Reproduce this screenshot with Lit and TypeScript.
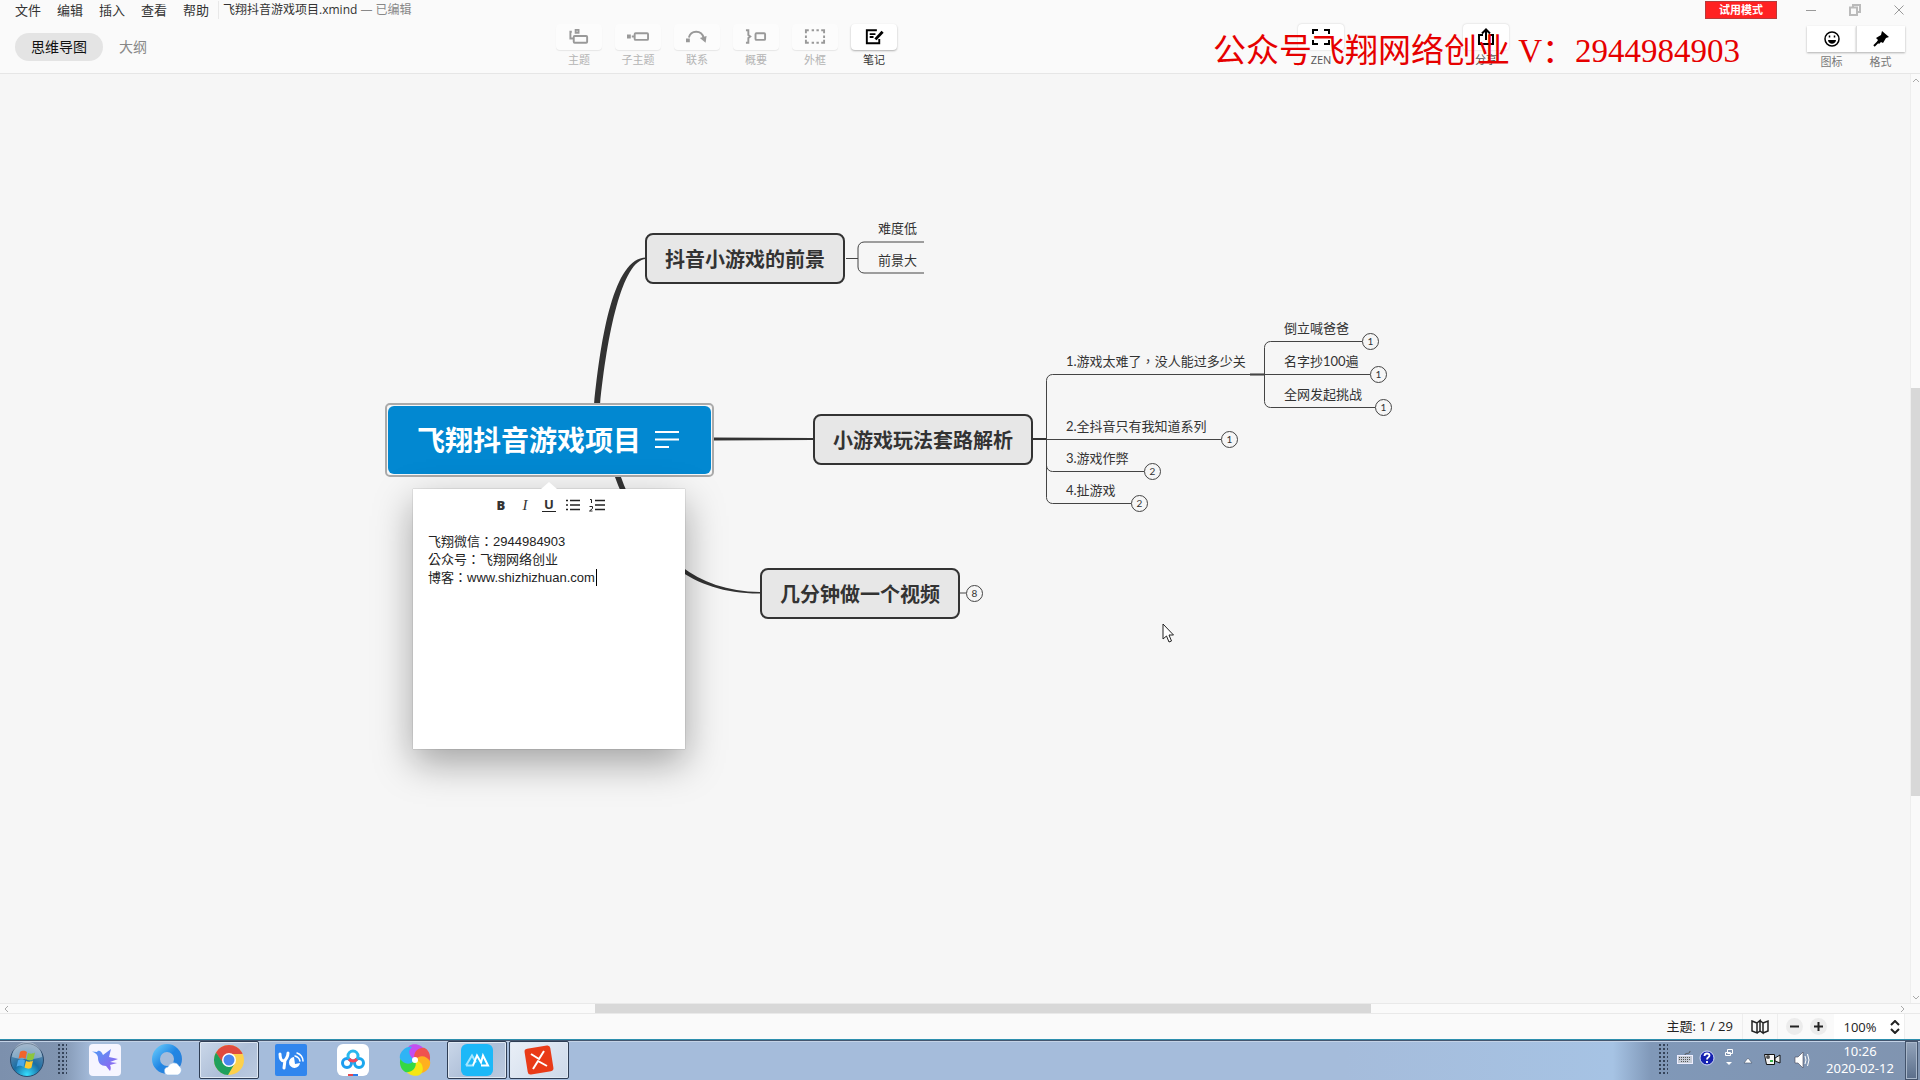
import { LitElement, html, svg, css } from "lit";
import { customElement } from "lit/decorators.js";
import { styleMap } from "lit/directives/style-map.js";

const HEADER = 74;
const at = (x: number, y: number) => styleMap({ left: `${x}px`, top: `${y - HEADER}px` });

const tools = [
  { label: "主题", on: false, icon: svg`<path d="M4 2.500H2.500V9.500H6M8 .500h3v3h-3z" /><rect x="6" y="7" width="14" height="7" rx="1" />` },
  { label: "子主题", on: false, icon: svg`<path d="M1 6.500h2v2h-2zM5 7.500h3" /><rect x="8" y="4" width="14" height="7" rx="1" />` },
  { label: "联系", on: false, icon: svg`<path d="M1 10.500h2v2h-2zM3 8.500C5 1 16 0 18.500 9" /><path class="fill" d="M14.500 9l7-2-1 7z" />` },
  { label: "概要", on: false, icon: svg`<path d="M1 1h2.500v5l2 1.500-2 1.500v5H1" /><rect x="11" y="4" width="10" height="7" rx="1" />` },
  { label: "外框", on: false, icon: svg`<path d="M2 4V1h3M8 1h2.500M13 1h2.500M18 1h3v3M21 6.500v2.500M21 11v3h-3M15.500 14H13M10.500 14H8M5 14H2v-3M2 9V6.500" />` },
  { label: "笔记", on: true, icon: svg`<path d="M14.500 1H4v13.500h13V10M7 5h6M7 8h4" /><path d="M20.500 2.500L13 10.500" stroke-width="3" />` },
];

const branches = [
  { text: "抖音小游戏的前景", x: 645, y: 233 },
  { text: "小游戏玩法套路解析", x: 813, y: 414 },
  { text: "几分钟做一个视频", x: 760, y: 568 },
];

const leaves = [
  { text: "难度低", x: 878, y: 228 },
  { text: "前景大", x: 878, y: 260 },
  { text: "1.游戏太难了，没人能过多少关", x: 1066, y: 361 },
  { text: "2.全抖音只有我知道系列", x: 1066, y: 426 },
  { text: "3.游戏作弊", x: 1066, y: 458 },
  { text: "4.扯游戏", x: 1066, y: 490 },
  { text: "倒立喊爸爸", x: 1284, y: 328 },
  { text: "名字抄100遍", x: 1284, y: 361 },
  { text: "全网发起挑战", x: 1284, y: 394 },
];

// Full-width commas are set in a face that centres them in their cell.
const centred = (text: string) =>
  text.split("，").map((part, i) => (i ? html`<span class="comma">，</span>${part}` : part));

const counts = [
  { n: 8, x: 974, y: 593 },
  { n: 1, x: 1229, y: 439 },
  { n: 2, x: 1152, y: 471 },
  { n: 2, x: 1139, y: 503 },
  { n: 1, x: 1370, y: 341 },
  { n: 1, x: 1378, y: 374 },
  { n: 1, x: 1383, y: 407 },
];

const petals = ["#c44df0", "#f0524f", "#ffb01f", "#f5e614", "#35d943", "#2fb4f5"];

const apps = [
  {
    name: "迅雷", open: false, bright: false,
    icon: svg`<rect width="32" height="32" rx="4" fill="#f6f5ff" />
      <path fill="url(#bird)" d="M3 7.500L8 8c1-2 4-2 6 3l8-6-2 8 9 2-8 3 7 1-7 2c1 2 1 4 0 6l-4-5c-5 0-8-3-8-8 0-3-2-5-6-6.500z" />`,
  },
  {
    name: "QQ浏览器", open: false, bright: false,
    icon: svg`<circle cx="16" cy="15" r="11" fill="none" stroke="url(#ring)" stroke-width="8" />
      <path fill="#fff" stroke="#8fb9e6" stroke-width=".6" d="M18 31a4 4 0 0 1-1-8 6 6 0 0 1 11-1 5 5 0 0 1-1 9z" />`,
  },
  {
    name: "Chrome", open: true, bright: false,
    icon: svg`<circle cx="16" cy="16" r="15" fill="#fdd04b" />
      <path fill="#e04a3f" d="M3 8.500A15 15 0 0 1 29 8.500L29.500 10H16L9 19z" />
      <path fill="#1fa05c" d="M3 8.500A15 15 0 0 0 15 31l7-12-6 3-6-3z" />
      <circle cx="16" cy="16" r="7" fill="#fff" /><circle cx="16" cy="16" r="5.500" fill="#4a86ee" />`,
  },
  {
    name: "YO", open: false, bright: false,
    icon: svg`<rect width="32" height="32" rx="2" fill="#3186ee" />
      <path d="M5 10c0 5 2 7 4 7 2-1 4-5 4-8M10 16l-1 8" fill="none" stroke="#fff" stroke-width="3" stroke-linecap="round" stroke-linejoin="round" />
      <path fill="#fff" d="M19 13a5.500 5.500 0 1 0 6 6l-5 1z" /><path d="M20 12a7 7 0 0 1 5 5M22 9a9 9 0 0 1 6 8" fill="none" stroke="#fff" stroke-width="1.500" stroke-linecap="round" />`,
  },
  {
    name: "百度网盘", open: false, bright: false,
    icon: svg`<rect width="32" height="32" rx="6" fill="#fff" />
      <g fill="none" stroke-width="3"><circle cx="10" cy="19" r="4.500" stroke="#1e9df0" /><circle cx="22" cy="19" r="4.500" stroke="#1aa7ee" /><circle cx="16" cy="12" r="5" stroke="#29b8ee" />
      <path d="M12 15a5 5 0 0 0 8 0" stroke="#f2495c" /></g>
      <path fill="#e8464c" d="M11 30h6v2h-6z" /><path fill="#2b7de9" d="M16 30h5v2h-5z" />`,
  },
  {
    name: "色环", open: false, bright: false,
    icon: svg`${petals.map((c, i) => svg`<path fill=${c} transform="rotate(${i * 60} 16 16)" d="M16 16C9 15 6 8 10 2c5-4 14-1 16 5-5-2-10 1-10 9z" />`)}<circle cx="16" cy="16" r="3" fill="#fff" />`,
  },
  {
    name: "小米", open: true, bright: false,
    icon: svg`<rect width="32" height="32" rx="6" fill="#1cb8f8" />
      <path d="M5 21.500l6-10 4 7M5 21.500h8" fill="none" stroke="#a5e6ff" stroke-width="2" /><path d="M12 21.500l4-10 4 7 2-7 5 10h-7" fill="none" stroke="#fff" stroke-width="2" />`,
  },
  {
    name: "XMind", open: true, bright: true,
    icon: svg`<rect x="3" y="3" width="26" height="26" rx="3" fill="#e93a17" transform="rotate(-9 16 16)" />
      <path d="M8 10l8 5 5-8M10 25l5-8 9 5" fill="none" stroke="#fff" stroke-width="2" stroke-linejoin="round" />`,
  },
];

@customElement("app-root")
export class AppRoot extends LitElement {
  static styles = css`
    :host {
      display: flex;
      flex-direction: column;
      height: 100vh;
      overflow: hidden;
      position: relative;
      background: #fafafa;
      color: #333;
      font: 13px/18px "Open Sans", "Noto Sans CJK SC", sans-serif;
    }
    * { box-sizing: border-box; }
    button, input, textarea {
      margin: 0; padding: 0; border: 0; background: none;
      font: inherit; color: inherit;
    }
    svg { display: block; flex: none; }
    .title { display: flex; align-items: center; height: 20px; padding: 0 15px; }
    .menus { display: flex; gap: 16px; padding-right: 9px; margin-right: 4px; border-right: 1px solid #e8e8e8; }
    .doc { font-size: 12px; }
    .doc small { font-size: 12px; color: #888; }
    .trial {
      margin-left: auto; margin-right: 28px; width: 72px; height: 18px;
      background: #ff2222; border: 1px solid #b83a3a; color: #fff;
      font-size: 11px; font-weight: 700; line-height: 16px;
    }
    .wins { display: flex; gap: 32px; }
    .wins svg { fill: none; stroke: #999; }
    .bar { display: flex; height: 54px; padding: 0 15px; border-bottom: 1px solid #e6e6e6; align-items: flex-start; }
    .tabs { display: flex; flex: none; width: 541px; padding-top: 13px; font-size: 14px; gap: 16px; }
    .tab { height: 28px; color: #888; }
    .tab.on { background: #e4e4e4; border-radius: 14px; padding: 0 16px; color: #111; }
    .tools { display: flex; gap: 13px; padding-top: 4px; }
    .tools.right { margin-left: auto; margin-right: 298px; gap: 119px; }
    .tool { width: 46px; display: flex; flex-direction: column; align-items: center; font-size: 11px; line-height: 18px; color: #b4b4b4; white-space: nowrap; }
    .tool .face {
      display: grid; place-items: center; width: 46px; height: 26px; margin-bottom: 1px;
      border-radius: 4px; background: #fcfcfc; box-shadow: 0 1px 1px rgba(0, 0, 0, .08);
    }
    .tool svg { fill: none; stroke: #999; stroke-width: 2; }
    .tool .fill { fill: #999; stroke: none; }
    .tool.on { color: #333; }
    .tool.on .face { background: #fff; box-shadow: 0 1px 2px rgba(0, 0, 0, .3); }
    .tool.on svg { stroke: #000; }
    .tool.soft { color: #555; }
    .tool.soft .face { box-shadow: 0 0 2px rgba(0, 0, 0, .2); }
    .pair { display: flex; padding-top: 6px; }
    .pair button { width: 49px; font-size: 11px; color: #777; display: flex; flex-direction: column; align-items: center; }
    .pair .face { width: 49px; height: 26px; display: grid; place-items: center; background: #fff; margin-bottom: 1px; box-shadow: 0 1px 2px rgba(0, 0, 0, .3); }
    .pair button + button .face { border-left: 1px solid #ddd; }
    .mark {
      position: absolute; left: 1213px; top: 31px; margin: 0; color: #e60000; white-space: nowrap;
      font: 33px/40px "Liberation Serif", "Noto Sans CJK SC", serif;
    }

    .work { flex: 1; min-height: 0; display: flex; background: #f6f6f6; }
    .canvas { flex: 1; min-width: 0; position: relative; overflow: hidden; }
    .links { position: absolute; left: 0; top: 0; width: 100%; height: 100%; fill: none; stroke: #444; }
    .links .solid { fill: #333; stroke: none; }
    .node {
      position: absolute; height: 51px; padding: 0 18px; border: 2px solid #333; border-radius: 8px;
      background: #e7e7e7; font-size: 20px; line-height: 47px; font-weight: 700; white-space: nowrap;
      font-family: "Noto Sans CJK SC", sans-serif;
    }
    .root {
      position: absolute; isolation: isolate; display: flex; align-items: center; gap: 14px;
      height: 74px; width: 329px; padding: 0 30px 2px; margin-left: -1px;
      border: 2px solid #aaa; border-radius: 5px; background: #f6f6f6; color: #fff; white-space: nowrap;
      font: 700 28px/40px "Noto Sans CJK SC", sans-serif;
    }
    .root::before { content: ""; position: absolute; z-index: -1; inset: 1px; background: #0288d1; border-radius: 6px; }
    .root svg { stroke: #fff; stroke-width: 2; }
    .leaf { position: absolute; height: 18px; margin-top: -9px; white-space: nowrap; font-family: Lato, "Noto Sans CJK SC", sans-serif; }
    .comma { font-family: "Noto Sans CJK TC", sans-serif; }
    .count {
      position: absolute; width: 17px; height: 17px; margin: -8px 0 0 -8px; border: 1px solid #444; border-radius: 50%;
      background: #f6f6f6; font-size: 10px; line-height: 15px; text-align: center; font-family: Lato, sans-serif;
    }
    .note {
      position: absolute; width: 272px; height: 260px; padding: 7px 15px 15px; background: #fff;
      box-shadow: 0 0 1px rgba(0, 0, 0, .4), 0 14px 36px rgba(0, 0, 0, .34); display: flex; flex-direction: column;
    }
    .note::before {
      content: ""; position: absolute; left: 128px; top: -7px;
      border: 8px solid transparent; border-top: 0; border-bottom: 7px solid #fff;
    }
    .marks { display: flex; justify-content: center; gap: 8px; margin-bottom: 19px; }
    .marks button { width: 16px; height: 18px; display: grid; place-items: center; }
    .marks svg { stroke: #222; fill: none; stroke-width: 1.5; }
    .b { font-weight: 800; }
    .i { font-style: italic; font-family: "Liberation Serif", serif; font-size: 15px; }
    .u { font-weight: 700; border-bottom: 1px solid #222; line-height: 13px; padding: 0 2px; }
    .note textarea {
      flex: 1; resize: none; outline: 0; overflow: hidden; color: #222;
      font: 13px/18px "Liberation Sans", "Noto Sans CJK TC", sans-serif;
    }
    .caret { position: absolute; left: 183px; top: 80px; width: 1px; height: 17px; background: #000; }
    .pointer { position: absolute; }
    .vscroll { width: 10px; flex: none; background: #fafafa; border-left: 1px solid #eee; display: flex; flex-direction: column; align-items: center; padding: 4px 0 3px; }
    .vscroll i { width: 9px; height: 408px; background: #d8d8d8; margin: 305px 0 auto; }
    .vscroll svg, .hscroll svg { fill: none; stroke: #aaa; }
    .hscroll { height: 11px; flex: none; display: flex; align-items: center; padding: 0 15px 0 4px; border: solid #e9e9e9; border-width: 1px 0; }
    .hscroll div { flex: 1; display: flex; }
    .hscroll i { margin-left: 31%; width: 41%; height: 9px; background: #d8d8d8; }

    .status { height: 25px; flex: none; display: flex; justify-content: flex-end; align-items: stretch; padding-right: 15px; color: #222; line-height: 24px; }
    .status .topic { padding-right: 9px; border-right: 1px solid #eee; }
    .status button { display: grid; place-items: center; }
    .status .map { width: 35px; border-right: 1px solid #eee; margin-right: 8px; }
    .status .zoom { width: 17px; height: 17px; border-radius: 50%; background: #ececec; align-self: center; margin-right: 7px; }
    .status svg { fill: none; stroke: #222; stroke-width: 2; }
    .zoomval { display: flex; align-items: center; width: 71px; background: #fff; border-right: 1px solid #eee; }
    .zoomval input { width: 52px; text-align: center; min-width: 0; height: 24px; }

    .task {
      height: 41px; flex: none; display: flex; align-items: stretch; border-top: 1px solid #2d8fae;
      box-shadow: inset 0 1px 0 #44566f, inset 0 2px 0 #c3d2e6;
      background: linear-gradient(90deg, #7c90ad 0, #8094b0 60px, #a5bcdb 92px, #a5bcdb 70%, #a6c3e4 84%, #8098b8 86%, #8094b0 100%);
      color: #fff;
    }
    .start { width: 54px; display: grid; place-items: center; }
    .grip { width: 9px; height: 32px; margin: 4px 8px 0 4px; background: radial-gradient(circle at 1px 1px, #35445a 1px, transparent 1px) 0 0 / 4px 4px; }
    .slots { display: flex; gap: 2px; padding-top: 1px; }
    .slot { width: 60px; height: 38px; display: grid; place-items: center; border-radius: 2px; }
    .slot.open { background: linear-gradient(135deg, #cad7e9, #aebfd8 55%, #bccbe0); border: 1px solid #2e3d54; box-shadow: inset 0 0 0 1px #dfe8f3; }
    .slot.bright { background: linear-gradient(135deg, #e9eff7, #cdd9e9); }
    .tray { margin-left: auto; display: flex; align-items: center; }
    .tray .grip { margin: 0 9px 0 0; }
    .clock { width: 90px; text-align: center; line-height: 17px; font-family: "Noto Sans", sans-serif; }
    .clock div { white-space: nowrap; }
    .desk { width: 13px; height: 39px; margin: 1px 2px 0 0; border: 1px solid #43536b; box-shadow: inset 0 0 0 1px #a9b7ca; background: linear-gradient(#93a4bb, #5b6e8a); }
  `;

  private header() {
    return html`
      <header>
        <div class="title">
          <nav class="menus">${["文件", "编辑", "插入", "查看", "帮助"].map((m) => html`<button>${m}</button>`)}</nav>
          <span class="doc">飞翔抖音游戏项目.xmind <small>— 已编辑</small></span>
          <button class="trial">试用模式</button>
          <div class="wins">
            <button aria-label="最小化"><svg width="12" height="12"><path d="M1 6.500h10" /></svg></button>
            <button aria-label="还原"><svg width="12" height="12"><path stroke="#bbb" stroke-width="2" d="M4 3V1h7v7H9M1 3.500h7V11H1z" /></svg></button>
            <button aria-label="关闭"><svg width="12" height="12"><path d="M1.500 1.500l9 9M10.500 1.500l-9 9" /></svg></button>
          </div>
        </div>
        <div class="bar">
          <div class="tabs"><button class="tab on">思维导图</button><button class="tab">大纲</button></div>
          <div class="tools">
            ${tools.map((t) => html`<button class="tool ${t.on ? "on" : ""}"><span class="face"><svg width="22" height="16" viewBox="0 0 23 16">${t.icon}</svg></span>${t.label}</button>`)}
          </div>
          <div class="tools right">
            <button class="tool on soft"><span class="face"><svg width="18" height="16"><path d="M1 5V1h5M12 1h5v4M17 11v4h-5M6 15H1v-4" /></svg></span>ZEN</button>
            <button class="tool on soft"><span class="face"><svg width="16" height="18"><path d="M5 7H1v9h14V7h-4M8 12V2M4 5.500l4-4 4 4" /></svg></span>分享</button>
          </div>
          <div class="pair">
            <button><span class="face"><svg width="16" height="16" fill="none" stroke="#000" stroke-width="1.500"><circle cx="8" cy="8" r="7" /><path fill="#000" stroke="none" d="M4 9h8c-.5 5-7.500 5-8 0z" /><path d="M5.500 4.500v2M10.500 4.500v2" /></svg></span>图标</button>
            <button><span class="face"><svg width="16" height="16"><path d="M9 0l7 6-3 1-3 5-2-1-2 2-2-2 1-2-2-2 5-3z" /><path d="M1 15l5-5" stroke="#000" stroke-width="2" /></svg></span>格式</button>
          </div>
        </div>
      </header>`;
  }

  private links() {
    return svg`
      <g transform="translate(0 ${-HEADER})">
        <path class="solid" d="M594 405C601 335 614 258 646 257.500V259C622 260 607 335 600 405z" />
        <path class="solid" d="M713 437.500L813 438v2L713 440.500z" />
        <path class="solid" d="M615 460C635 522 672 591 760 592v1.500C668 594 631 527 609 460z" />
        <path d="M846 258.500h12M924 242H864a6 6 0 0 0-6 6v19a6 6 0 0 0 6 6h60" />
        <path stroke="#333" stroke-width="2" d="M1033 439h13M1250 374.500h14" />
        <path d="M1265 374.500H1052.500a6 6 0 0 0-6 6V497.500a6 6 0 0 0 6 6H1131M1046.500 439.500H1221M1046.500 465.500a6 6 0 0 0 6 6H1144" />
        <path d="M1362 341.500H1270.500a6 6 0 0 0-6 6V401.500a6 6 0 0 0 6 6H1375M1264.500 374.500H1370M960 593h6" />
      </g>`;
  }

  private canvas() {
    return html`
      <main class="work">
        <section class="canvas">
          <svg class="links">${this.links()}</svg>
          ${branches.map((b) => html`<div class="node" style=${at(b.x, b.y)}>${b.text}</div>`)}
          ${leaves.map((l) => html`<div class="leaf" style=${at(l.x, l.y)}>${centred(l.text)}</div>`)}
          ${counts.map((c) => html`<button class="count" style=${at(c.x, c.y)}>${c.n}</button>`)}
          <div class="root" style=${at(386, 403)}>飞翔抖音游戏项目<svg width="24" height="18"><path d="M0 2h24M0 9.500h24M0 17h14" /></svg></div>
          <div class="note" style=${at(413, 489)}>
            <div class="marks">
              <button class="b">B</button>
              <button class="i">I</button>
              <button><span class="u">U</span></button>
              <button aria-label="项目列表"><svg width="14" height="12"><path d="M4 1.500h10M4 6h10M4 10.500h10M0 1.500h2M0 6h2M0 10.500h2" /></svg></button>
              <button aria-label="编号列表"><svg width="16" height="14"><path d="M6 2.500h10M6 7h10M6 11.500h10" /><path stroke-width="1" d="M1 1.500h1.500V5M.500 8.500h3v2l-3 2.500h3" /></svg></button>
            </div>
            <textarea aria-label="笔记" spellcheck="false" .value=${"飞翔微信：2944984903\n公众号：飞翔网络创业\n博客：www.shizhizhuan.com"}></textarea>
            <span class="caret"></span>
          </div>
          <svg class="pointer" style=${at(1162, 623)} width="13" height="20"><path fill="#fff" stroke="#222" d="M1 1v15l3.500-3 2.500 6 2.500-1-2.500-6h4.500z" /></svg>
        </section>
        <div class="vscroll"><svg width="8" height="5"><path d="M1 4l3-3 3 3" /></svg><i></i><svg width="8" height="5"><path d="M1 1l3 3 3-3" /></svg></div>
      </main>
      <div class="hscroll"><svg width="5" height="8"><path d="M4 1L1 4l3 3" /></svg><div><i></i></div><svg width="5" height="8"><path d="M1 1l3 3-3 3" /></svg></div>`;
  }

  private status() {
    return html`
      <footer class="status">
        <span class="topic">主题: 1 / 29</span>
        <button class="map" aria-label="导航"><svg width="18" height="16"><path d="M1 2l5 2v10l-5-2zM6 4l3-2.500V12l-3 2M9 1.500L12 4v10l-3-2M12 4l5-2v10l-5 2" stroke-width="1.500" /></svg></button>
        <button class="zoom" aria-label="缩小"><svg width="9" height="9"><path d="M0 4.500h9" /></svg></button>
        <button class="zoom" aria-label="放大"><svg width="9" height="9"><path d="M0 4.500h9M4.500 0v9" /></svg></button>
        <span class="zoomval"><input aria-label="缩放比例" value="100%" /><svg width="18" height="14"><path d="M5 5l4-4 4 4M5 9l4 4 4-4" /></svg></span>
      </footer>`;
  }

  private taskbar() {
    return html`
      <footer class="task">
        <button class="start" aria-label="开始">
          <svg width="36" height="36" viewBox="0 0 36 36">
            <defs>
              <radialGradient id="orb" cx=".5" cy=".95" r=".9"><stop offset="0" stop-color="#35e0ff" /><stop offset=".45" stop-color="#1a6ea4" /><stop offset="1" stop-color="#6f8fb0" /></radialGradient>
            </defs>
            <circle cx="18" cy="18" r="16.500" fill="url(#orb)" stroke="#2b4a6b" />
            <path fill="#fff" opacity=".35" d="M3 15a15 15 0 0 1 30 0c-9 3-21 3-30 0z" />
            <path fill="#f0642b" d="M11 10c3-2 5-1 7 0l-1.500 7c-2-1-4-2-7 0z" />
            <path fill="#8cc63f" d="M19 11c2 1 5 1 7-.500L24.500 17c-2 2-4 2-7 .500z" />
            <path fill="#4aa8ea" d="M9 18.500c3-2 5-1 7 0L14.500 25c-2-1-4-2-7 0z" />
            <path fill="#fdc82f" d="M17 19c2 1 5 1 7-.500L22.500 25.500c-2 2-5 1-7 0z" />
          </svg>
        </button>
        <span class="grip"></span>
        <div class="slots">
          ${apps.map((a) => html`<button class="slot ${a.open ? "open" : ""} ${a.bright ? "bright" : ""}" aria-label=${a.name}>
            <svg width="32" height="32" viewBox="0 0 32 32">
              <defs>
                <linearGradient id="bird" x1="0" y1="0" x2="1" y2="1"><stop offset="0" stop-color="#4f9cf5" /><stop offset="1" stop-color="#9a5cf0" /></linearGradient>
                <linearGradient id="ring" x1="0" y1="0" x2="1" y2="1"><stop offset="0" stop-color="#5cc0f8" /><stop offset=".5" stop-color="#2186e4" /><stop offset="1" stop-color="#2a7fd8" /></linearGradient>
              </defs>
              ${a.icon}
            </svg></button>`)}
        </div>
        <div class="tray">
          <span class="grip"></span>
          <svg width="138" height="32" viewBox="0 0 138 32">
            <rect x="0.500" y="11.500" width="15" height="8" fill="#c6ccd6" stroke="#eef" /><path d="M2 13.500h12M2 15.500h12M4 17.500h8" stroke="#555" stroke-dasharray="1 1" /><path d="M8 11c0-3 5 0 5-4" fill="none" stroke="#555" />
            <circle cx="30" cy="14" r="7" fill="#1420b0" stroke="#cfd8f5" /><path d="M27.500 12c0-3.500 5-3 5-.500 0 2-2.500 1.500-2.500 4M30 17v2" fill="none" stroke="#fff" stroke-width="1.800" />
            <path d="M50.500 5.500h5v4h-5zM48.500 8.500h5v3h-5z" fill="#8094b0" stroke="#fff" /><path d="M49 18h6l-3 3z" fill="#fff" />
            <path d="M67 19l4-5 4 5z" fill="#fff" stroke="#44546c" stroke-width=".6" />
            <path d="M87.500 10.500h10v10h-8z" fill="#f4f4f4" stroke="#111" /><path d="M98 14l5-3v8l-5-2z" fill="#eee" stroke="#111" /><circle cx="91" cy="13" r="2" fill="#555" /><path d="M93 17h3" stroke="#39b54a" stroke-width="2" />
            <path d="M118 13h3l5-5v16l-5-5h-3z" fill="#fff" stroke="#445" stroke-width=".6" /><path d="M128 12q2 4 0 8M130.500 10q3 6 0 12" fill="none" stroke="#fff" />
          </svg>
          <div class="clock"><div>10:26</div><div>2020-02-12</div></div>
          <button class="desk" aria-label="显示桌面"></button>
        </div>
      </footer>`;
  }

  render() {
    return html`${this.header()}${this.canvas()}${this.status()}${this.taskbar()}
      <p class="mark">公众号飞翔网络创业 V：2944984903</p>`;
  }
}
